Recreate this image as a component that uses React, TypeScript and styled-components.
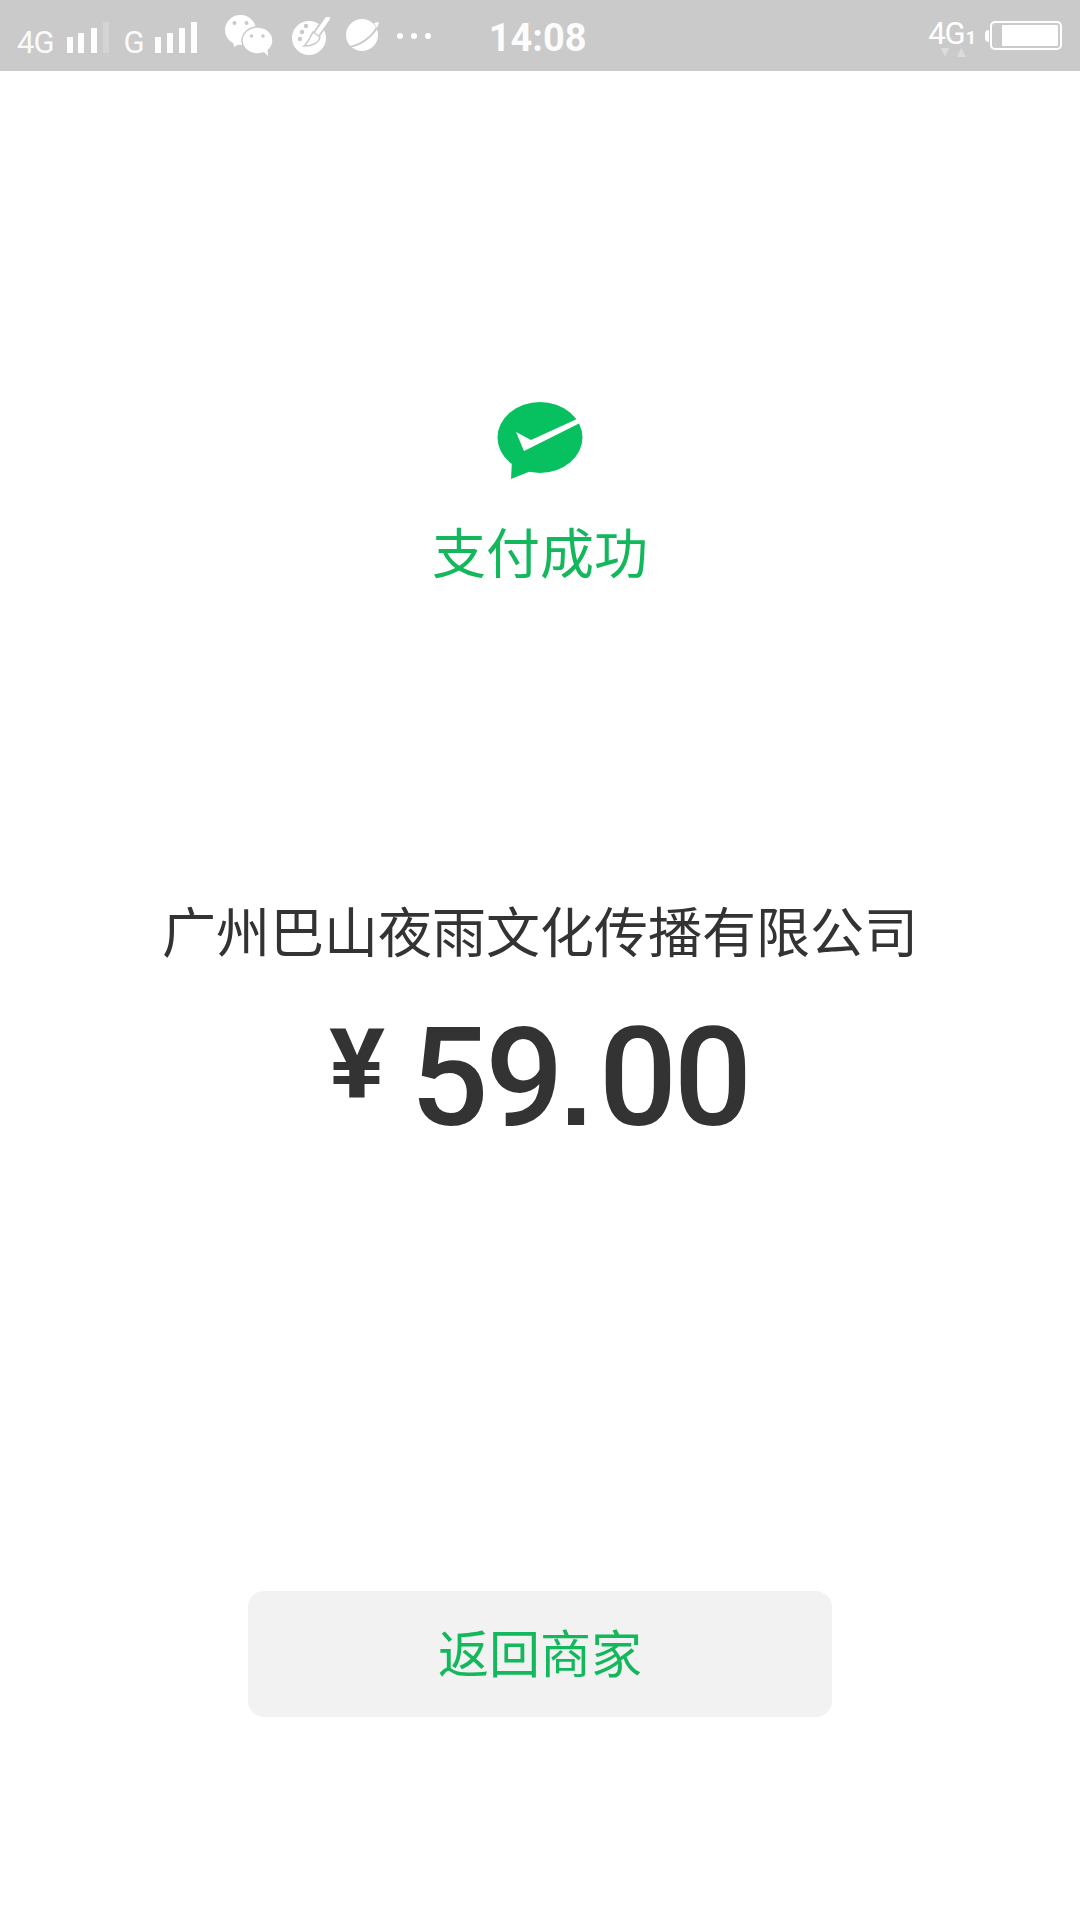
import React from "react";
import styled, { createGlobalStyle } from "styled-components";

const Global = createGlobalStyle`
  html, body { margin: 0; padding: 0; background: #fff; }
  body { font-family: "Noto Sans CJK SC", "Noto Sans", sans-serif; }
`;

const Screen = styled.div`
  width: 1080px;
  height: 1920px;
  display: flex;
  flex-direction: column;
  background: #fff;
  overflow: hidden;
`;

const StatusBar = styled.header`
  height: 71px;
  flex: none;
  display: flex;
  align-items: center;
  background: #cacaca;
  color: #fff;
  padding: 0 18px 0 17px;
  font-family: Roboto, "Liberation Sans", sans-serif;
`;

const Network = styled.span<{ $gap: number }>`
  font-size: 31px;
  line-height: 1;
  margin-top: 14px;
  margin-right: ${(p) => p.$gap}px;
  letter-spacing: -1px;
  opacity: 0.92;
`;

const Bars = styled.svg<{ $gap: number }>`
  flex: none;
  margin-top: 4px;
  margin-right: ${(p) => p.$gap}px;
`;

const AppIcon = styled.svg<{ $gap: number }>`
  flex: none;
  margin-right: ${(p) => p.$gap}px;
`;

const Clock = styled.span`
  font-size: 38px;
  font-weight: 700;
  line-height: 1;
  margin-left: 57px;
  margin-top: 4px;
  opacity: 0.95;
`;

const StatusRight = styled.div`
  margin-left: auto;
  display: flex;
  align-items: center;
`;

const SimBlock = styled.div`
  position: relative;
  display: flex;
  align-items: baseline;
  margin-right: 9px;
  margin-top: -5px;
`;

const SimLabel = styled.span`
  font-size: 31px;
  line-height: 1;
  letter-spacing: -1px;
`;

const SimIndex = styled.span`
  font-size: 18px;
  font-weight: 700;
  line-height: 1;
  margin-left: 1px;
`;

const Arrows = styled.svg`
  position: absolute;
  left: 12px;
  top: 30px;
`;

const BatteryCap = styled.span`
  width: 4px;
  height: 12px;
  border-radius: 4px 0 0 4px;
  background: #fff;
  margin-right: 1px;
`;

const Battery = styled.div`
  width: 72px;
  height: 29px;
  box-sizing: border-box;
  border: 2px solid #fff;
  border-radius: 5px;
  padding: 2px 2px 2px 10px;
  display: flex;
`;

const BatteryLevel = styled.span`
  flex: 1;
  background: #fff;
  border-radius: 1px;
`;

const Body = styled.main`
  flex: 1;
  display: flex;
  flex-direction: column;
  align-items: center;
  padding-top: 331px;
`;

const Title = styled.h1`
  margin: 36px 0 0;
  font-size: 54px;
  line-height: 70px;
  font-weight: 400;
  color: #14b85c;
`;

const Merchant = styled.div`
  margin-top: 308px;
  font-size: 54px;
  line-height: 72px;
  font-weight: 400;
  color: #333;
  white-space: nowrap;
`;

const Amount = styled.div`
  margin-top: 30px;
  display: flex;
  align-items: flex-start;
  color: #333;
  font-family: Roboto, "Liberation Sans", sans-serif;
  font-weight: 500;
`;

const Currency = styled.span`
  font-size: 97px;
  font-weight: 700;
  line-height: 100px;
  margin-top: 18px;
  margin-right: 27px;
  transform: scaleX(1.08);
`;

const Digits = styled.span`
  font-size: 138px;
  line-height: 165px;
  letter-spacing: -3.5px;
`;

const Point = styled.span`
  font-family: "Liberation Sans", sans-serif;
  font-size: 114px;
  font-weight: 700;
  letter-spacing: 7px;
`;

const ReturnButton = styled.button`
  margin-top: 423px;
  width: 584px;
  height: 126px;
  border: none;
  border-radius: 16px;
  background: #f2f2f2;
  color: #14b85c;
  font-family: inherit;
  font-size: 51px;
  padding: 0 0 6px;
`;

const WeChatGlyph = () => (
  <AppIcon $gap={19} width="48" height="42" viewBox="0 0 48 42" fill="#fff">
    <ellipse cx="15.500" cy="15" rx="15.500" ry="15" />
    <path d="M8 25l1 7 7-4z" />
    <ellipse cx="32.500" cy="25.500" rx="15.500" ry="13.500" stroke="#cacaca" strokeWidth="1.500" />
    <path d="M38 36l5 5-.5-7z" />
    <circle cx="9.500" cy="8" r="2" fill="#cacaca" />
    <circle cx="21.500" cy="8" r="2" fill="#cacaca" />
    <circle cx="26.500" cy="21" r="1.800" fill="#cacaca" />
    <circle cx="38" cy="21" r="1.800" fill="#cacaca" />
  </AppIcon>
);

const PaletteGlyph = () => (
  <AppIcon $gap={16} width="38" height="38" viewBox="0 0 38 38" fill="#fff">
    <circle cx="17" cy="21" r="17" />
    <circle cx="10" cy="15" r="2.200" fill="#cacaca" />
    <circle cx="8" cy="22" r="2.200" fill="#cacaca" />
    <circle cx="14" cy="9" r="2.200" fill="#cacaca" />
    <path d="M36 1L24 18" stroke="#cacaca" strokeWidth="8" strokeLinecap="round" fill="none" />
    <path d="M36 1L24 18" stroke="#fff" strokeWidth="4.500" strokeLinecap="round" fill="none" />
    <path d="M21 15l7 5c-1 6-8 9-16 9 4-3 6-9 9-14z" fill="#fff" stroke="#cacaca" strokeWidth="1.500" />
  </AppIcon>
);

const PlanetGlyph = () => (
  <AppIcon $gap={16} width="34" height="35" viewBox="0 0 34 35" fill="#fff">
    <circle cx="16" cy="17" r="16" />
    <path d="M1 29C12 29 28 19 33 5" stroke="#cacaca" strokeWidth="2" fill="none" />
    <path d="M28 5l5-1-2 6z" />
  </AppIcon>
);

const SignalBars = ({ gap, dim, offsets }: { gap: number; dim: boolean; offsets: number[] }) => {
  const heights = [16, 20, 25, 31];
  return (
    <Bars $gap={gap} width="42" height="31" viewBox="0 0 42 31">
      {heights.map((h, i) => (
        <rect
          key={h}
          x={offsets[i]}
          y={31 - h}
          width="6"
          height={h}
          fill="#fff"
          opacity={dim && i === 3 ? 0.2 : 0.95}
        />
      ))}
    </Bars>
  );
};

export default function App() {
  return (
    <Screen>
      <Global />
      <StatusBar>
        <Network $gap={13}>4G</Network>
        <SignalBars gap={15} dim offsets={[0, 11, 24, 36]} />
        <Network $gap={11}>G</Network>
        <SignalBars gap={28} dim={false} offsets={[0, 12, 24, 36]} />
        <WeChatGlyph />
        <PaletteGlyph />
        <PlanetGlyph />
        <AppIcon $gap={0} width="36" height="10" viewBox="0 0 36 10" fill="#fff">
          <circle cx="4" cy="5" r="3" />
          <circle cx="18" cy="5" r="3" />
          <circle cx="32" cy="5" r="3" />
        </AppIcon>
        <Clock>14:08</Clock>
        <StatusRight>
          <SimBlock>
            <SimLabel>4G</SimLabel>
            <SimIndex>1</SimIndex>
            <Arrows width="26" height="10" viewBox="0 0 26 10" fill="#fff" opacity="0.35">
              <path d="M1 0h8L5 9z" />
              <path d="M21 0l5 9h-9z" />
            </Arrows>
          </SimBlock>
          <BatteryCap />
          <Battery>
            <BatteryLevel />
          </Battery>
        </StatusRight>
      </StatusBar>
      <Body>
        <svg width="86" height="78" viewBox="0 0 86 78">
          <ellipse cx="43" cy="35.500" rx="42.500" ry="35.500" fill="#07c160" />
          <path fill="#07c160" d="M15 58L14 77 34 69z" />
          <path fill="#fff" d="M19 30L34 38 80 17 83 21 27 49z" />
        </svg>
        <Title>支付成功</Title>
        <Merchant>广州巴山夜雨文化传播有限公司</Merchant>
        <Amount>
          <Currency>¥</Currency>
          <Digits>
            59<Point>.</Point>00
          </Digits>
        </Amount>
        <ReturnButton>返回商家</ReturnButton>
      </Body>
    </Screen>
  );
}
